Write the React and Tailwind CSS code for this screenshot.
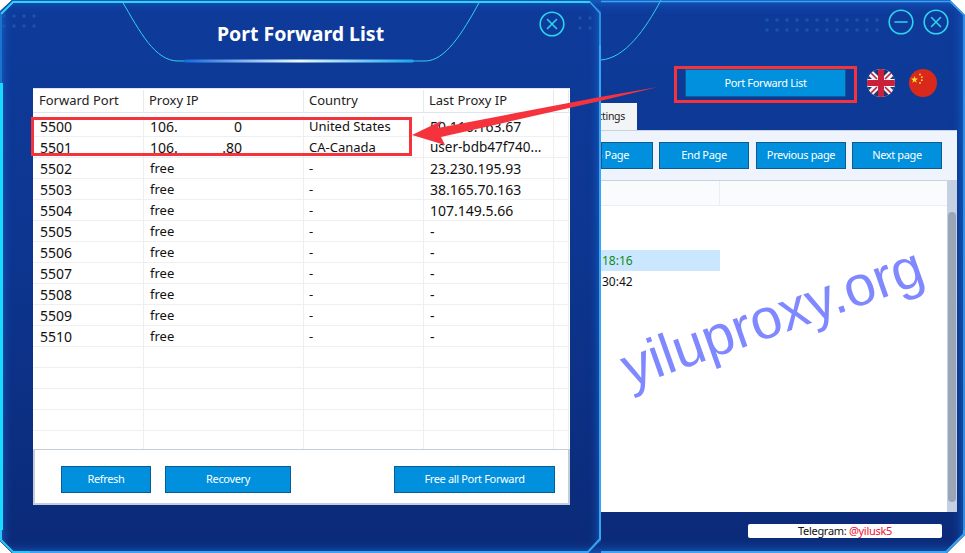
const font = { fontFamily: '"Noto Sans", "Liberation Sans", sans-serif' };

const ports = [
  ['5500', 'ip', '0', 'United States', '50.116.163.67'],
  ['5501', 'ip', '.80', 'CA-Canada', 'user-bdb47f740...'],
  ['5502', 'free', '', '-', '23.230.195.93'],
  ['5503', 'free', '', '-', '38.165.70.163'],
  ['5504', 'free', '', '-', '107.149.5.66'],
  ['5505', 'free', '', '-', '-'],
  ['5506', 'free', '', '-', '-'],
  ['5507', 'free', '', '-', '-'],
  ['5508', 'free', '', '-', '-'],
  ['5509', 'free', '', '-', '-'],
  ['5510', 'free', '', '-', '-'],
  ['', '', '', '', ''],
  ['', '', '', '', ''],
  ['', '', '', '', ''],
  ['', '', '', '', ''],
  ['', '', '', '', ''],
];

const cols = 'grid grid-cols-[111px_160px_120px_130px_15px]';
const cell = 'border-r border-b border-[#eeeff1] flex items-center whitespace-nowrap overflow-hidden';

function BlueButton({ className, children }) {
  return (
    <button className={`flex h-[27px] items-center justify-center overflow-hidden whitespace-nowrap border border-[#105a92] bg-[#0090dd] text-[11px] tracking-[-0.35px] text-white ${className}`}>
      {children}
    </button>
  );
}

function CircleIcon({ minus, size = 26 }) {
  return (
    <svg width={size} height={size} viewBox="0 0 26 26" fill="none" stroke="#2fd3ee" strokeWidth="1.6" strokeLinecap="round">
      <circle cx="13" cy="13" r="11.8" />
      {minus ? <path d="M7 13h12" /> : <path d="M8.5 8.5l9 9M17.5 8.5l-9 9" />}
    </svg>
  );
}

function Dots({ width, rows = 2 }) {
  const id = `dots-${width}`;
  return (
    <svg width={width} height={rows * 10} fill="none">
      <defs>
        <pattern id={id} width="10" height="10" patternUnits="userSpaceOnUse">
          <circle cx="4" cy="4" r="1.7" fill="#1a54ab" />
        </pattern>
      </defs>
      <rect width={width} height={rows * 10} fill={`url(#${id})`} />
    </svg>
  );
}

function UkFlag() {
  return (
    <svg width="28" height="28" viewBox="0 0 28 28">
      <defs>
        <clipPath id="uk"><circle cx="14" cy="14" r="14" /></clipPath>
      </defs>
      <g clipPath="url(#uk)">
        <rect width="28" height="28" fill="#f4f4f6" />
        <path d="M4 0L11 7V0ZM17 0v7l7-7ZM0 5v5h5ZM28 5l-5 5h5ZM0 18v5l5-5ZM28 18h-5l5 5ZM11 21l-7 7h7ZM17 21v7h7Z" fill="#27336f" />
        <path d="M1 1l9 9M27 1l-9 9M1 27l9-9M27 27l-9-9" stroke="#c9203c" strokeWidth="1.6" />
        <path d="M11 0h6v11h11v6H17v11h-6V17H0v-6h11Z" fill="#c9203c" />
      </g>
    </svg>
  );
}

function CnFlag() {
  return (
    <svg width="28" height="28" viewBox="0 0 28 28">
      <circle cx="14" cy="14" r="14" fill="#d9291c" />
      <path d="M5.5 7l.9 2.6h2.7l-2.2 1.6.8 2.6-2.2-1.6-2.2 1.6.8-2.6-2.2-1.6h2.7Z" fill="#fadf2c" />
      <circle cx="11" cy="5.5" r=".9" fill="#fadf2c" />
      <circle cx="12.8" cy="8.2" r=".9" fill="#fadf2c" />
      <circle cx="12.8" cy="11.2" r=".9" fill="#fadf2c" />
      <circle cx="11" cy="14" r=".9" fill="#fadf2c" />
    </svg>
  );
}

function BackWindow() {
  return (
    <div className="absolute inset-0 flex flex-col bg-[linear-gradient(180deg,#0e3b9b_0%,#0d3690_45%,#0b2a78_100%)] pb-[15px] pl-[601px] pr-[8px] [clip-path:polygon(12px_0,950px_0,100%_15px,100%_535px,947px_100%,12px_100%,0_541px,0_12px)] shadow-[inset_0_0_14px_#1c78e0]">
      <div className="flex h-[44px] items-start justify-end pr-[8px] pt-[9px]">
        <div className="mr-[5px] mt-[7px]"><Dots width={120} /></div>
        <div className="flex gap-[9px]">
          <CircleIcon minus />
          <CircleIcon />
        </div>
      </div>
      <div className="flex h-[59px] items-start justify-end pr-[20px] pt-[25px]">
        <button className="mr-[21px] flex h-[28px] w-[161px] items-center justify-center border border-[#105a92] bg-[#0090dd] text-[11px] tracking-[-0.35px] text-white">
          Port Forward List
        </button>
        <div className="mr-[14px] flex"><UkFlag /></div>
        <div className="flex"><CnFlag /></div>
      </div>
      <div className="flex h-[27px] items-end">
        <div className="flex h-[27px] w-[36px] items-center justify-end bg-[#f3f4f6] pr-[12px] text-[10.5px] tracking-[-0.3px] text-[#222]">ttings</div>
      </div>
      <div className="flex h-[51px] gap-[6px] border-b border-t border-[#c5d2e2] bg-[#eff3fb] pl-[0px] pt-[11px]">
        <BlueButton className="w-[52px] justify-end pr-[23px]">Top Page</BlueButton>
        <BlueButton className="w-[90px]">End Page</BlueButton>
        <BlueButton className="ml-[1px] w-[90px]">Previous page</BlueButton>
        <BlueButton className="w-[90px]">Next page</BlueButton>
      </div>
      <div className="flex min-h-0 flex-1 bg-white">
        <div className="flex-1 text-[12px]">
          <div className="flex h-[25px] border-b border-[#e8eff8] bg-[#fafbfd]">
            <div className="w-[119px] border-r border-[#e8eff8]" />
          </div>
          <div className="mt-[44px] flex h-[21px] w-[119px] items-center bg-[#cbe6ff] pl-px text-[#128a17]">18:16</div>
          <div className="flex h-[21px] items-center pl-px text-[#111]">30:42</div>
        </div>
        <div className="w-[10px] bg-[#c5d0e3] px-[1px] pt-[31px]">
          <div className="h-[290px] rounded-full bg-[#9aa5b6]" />
        </div>
      </div>
      <div className="flex justify-end pr-[15px] pt-[12px]">
        <div className="flex h-[14px] w-[194px] items-center justify-center rounded-[2px] bg-white text-[11px] tracking-[-0.3px] text-[#111]">
          Telegram:&nbsp;<span className="text-[#f0102d]">@yilusk5</span>
        </div>
      </div>
    </div>
  );
}

function PortWindow() {
  return (
    <div className="absolute bottom-0 left-0 top-0 w-[601px] bg-[linear-gradient(180deg,#0e3b9b_0%,#0d3690_45%,#0b2a78_100%)] [clip-path:polygon(12px_0,590px_0,100%_11px,100%_541px,589px_100%,12px_100%,0_541px,0_11px)] shadow-[inset_0_0_12px_#1d7be4]">
      <div className="grid h-[88px] grid-cols-[1fr_auto_1fr] items-start px-[36px] pt-[12px]">
        <div className="-ml-[36px]"><Dots width={40} /></div>
        <div className="text-[19.5px] font-bold leading-[44px] text-white">Port Forward List</div>
        <div className="-mt-px flex justify-end"><CircleIcon /></div>
      </div>
      <div className="ml-[33px] w-[537px]">
        <div className={`${cols} h-[25px] border-b border-t border-[#dfe5ee] bg-white pt-px text-[13px] text-[#222]`}>
          {['Forward Port', 'Proxy IP', 'Country', 'Last Proxy IP', ''].map((h, i) => (
            <div key={i} className={`flex items-center border-r border-[#e6e9ef] ${i === 0 ? 'pl-[6px]' : 'pl-[5px]'}`}>{h}</div>
          ))}
        </div>
        <div className="h-[336px] overflow-hidden bg-white pt-[3px] text-[14px] text-[#111]">
          <div className="h-[333px] overflow-hidden">
            {ports.map((r, i) => (
              <div key={i} className={`${cols} h-[21px]`}>
                <div className={`${cell} pl-[7px]`}>{r[0]}</div>
                <div className={`${cell} pl-[6px]`}>
                  {r[1] === 'ip' ? (
                    <span className="flex w-[92px] justify-between"><span>106.</span><span>{r[2]}</span></span>
                  ) : <span className="pt-[2px] text-[13px]">{r[1]}</span>}
                </div>
                <div className={`${cell} pl-[5px] pt-[2px] text-[13px]`}>{r[3]}</div>
                <div className={`${cell} pl-[6px] ${r[4].startsWith('user') ? 'text-[13.5px]' : ''}`}>{r[4]}</div>
                <div className={cell} />
              </div>
            ))}
          </div>
        </div>
        <div className="flex h-[56px] items-center border-2 border-t-[1.5px] border-[#c3ced9] bg-white pl-[26px] pr-[13px] pt-[6px]">
          <BlueButton className="w-[90px]">Refresh</BlueButton>
          <BlueButton className="ml-[14px] w-[126px]">Recovery</BlueButton>
          <BlueButton className="ml-auto w-[161px]">Free all Port Forward</BlueButton>
        </div>
      </div>
    </div>
  );
}

function Annotations() {
  return (
    <>
      {/* glowing window frames, title tab curves */}
      <svg className="absolute left-0 top-0" width="965" height="553" fill="none">
        <path d="M122 1C140 32 155 61 178 61H425C445 61 462 34 480 1" stroke="#2fd3ee" strokeWidth="1" />
        <path d="M601 60C625 58 645 30 661 0" stroke="#2fd3ee" strokeWidth="1" />
        <defs>
          <linearGradient id="glow" x1="0" x2="1" y1="0" y2="0">
            <stop offset="0" stopColor="#1668dc" />
            <stop offset=".5" stopColor="#e8fbff" />
            <stop offset="1" stopColor="#1ba4ec" />
          </linearGradient>
        </defs>
        <rect x="184" y="59.5" width="230" height="3" rx="1.5" fill="url(#glow)" />
        {[580, 590].map((x) => [18, 28].map((y) => <circle key={`${x}-${y}`} cx={x} cy={y} r="1.7" fill="#1a54ab" />))}

        <path d="M1 14L13 2H590" stroke="#2dd3f2" strokeWidth="2" />
        <path d="M590 2L600 13V45" stroke="#2fa5ee" strokeWidth="1.5" />
        <path d="M1.5 83V530" stroke="#18dcff" strokeWidth="3" />
        <path d="M1 14V83" stroke="#1c7fd8" strokeWidth="1.5" />
        <path d="M1 530V540L13 552H30" stroke="#2dc4f5" strokeWidth="2" />
        <path d="M30 552H588L600 539V45" stroke="#38a2f4" strokeWidth="2" />
        <path d="M601 1.5H950L964 15V530" stroke="#3aa4f2" strokeWidth="1.5" />
        <path d="M601 552H946L964 534V530" stroke="#3aa4f2" strokeWidth="2" />
      </svg>
      <div className="absolute left-[674px] top-[66px] h-[37px] w-[183px] border-[3px] border-[#f5333c]" />
      <div className="absolute left-[31px] top-[117px] h-[39px] w-[381px] border-[3px] border-[#f5333c]" />
      <svg className="absolute left-0 top-0" width="965" height="200">
        <polygon points="412,135 441,121 438,128 600,97 658,87 600,101 441,137 445,145" fill="#f5333c" />
      </svg>
      <div
        className="absolute left-[614px] top-[282px] whitespace-nowrap text-[56.5px] leading-[70px] text-[#8088ff] [transform:rotate(-19.5deg)]"
        style={{ fontFamily: '"Liberation Sans", sans-serif' }}
      >
        yiluproxy.org
      </div>
    </>
  );
}

export default function App() {
  return (
    <div className="relative h-[553px] w-[965px] overflow-hidden bg-white" style={font}>
      <BackWindow />
      <PortWindow />
      <Annotations />
    </div>
  );
}
